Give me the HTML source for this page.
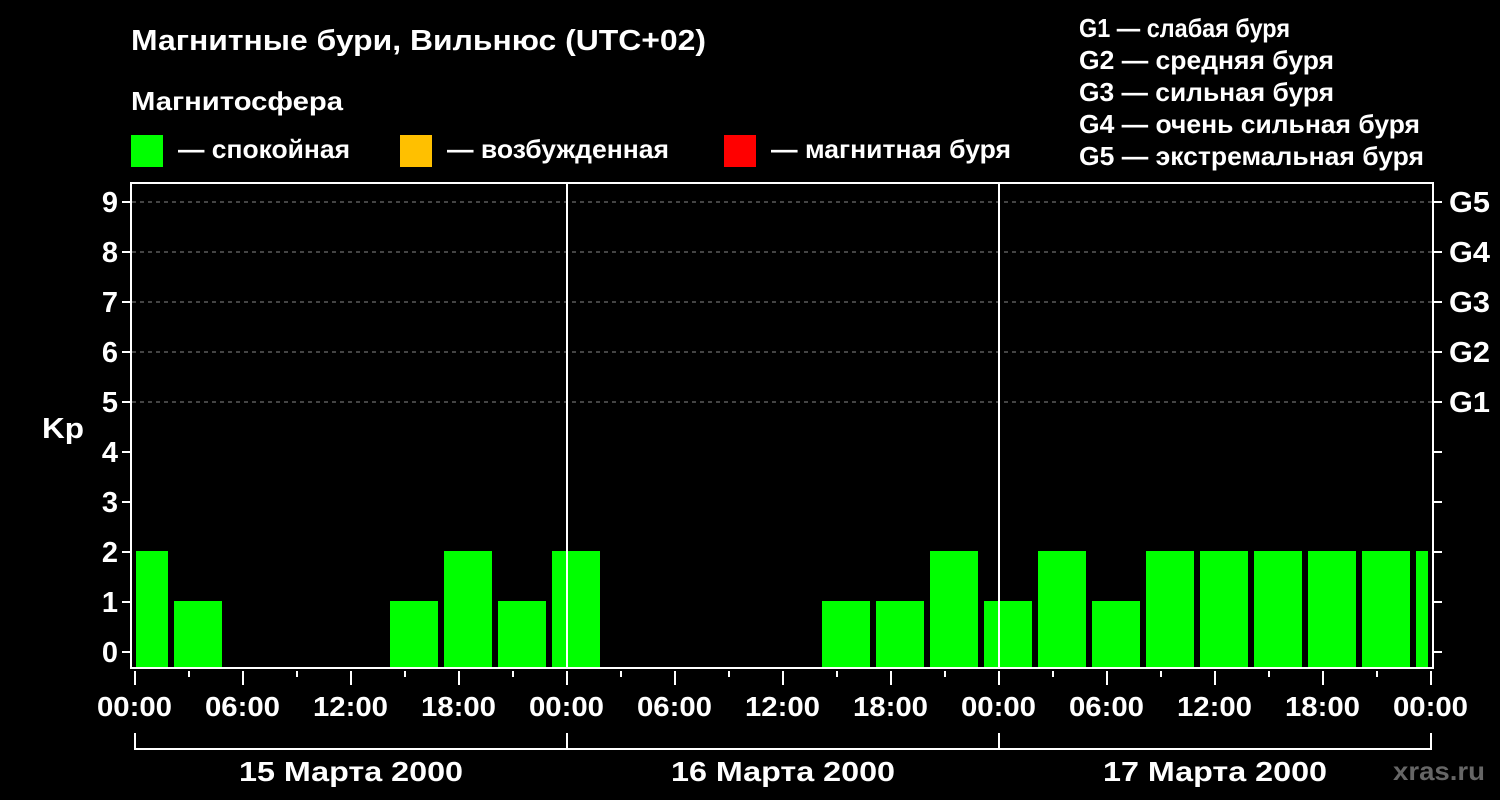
<!DOCTYPE html>
<html><head><meta charset="utf-8"><style>
html,body{margin:0;padding:0;background:#000;}
svg{display:block;font-family:"Liberation Sans",sans-serif;font-weight:bold;}
</style></head><body>
<svg width="1500" height="800" viewBox="0 0 1500 800" xmlns="http://www.w3.org/2000/svg">
<rect width="1500" height="800" fill="#000"/>
<g fill="#fff">
<text x="131" y="50" font-size="29" textLength="575" lengthAdjust="spacingAndGlyphs">Магнитные бури, Вильнюс (UTC+02)</text>
<text x="131" y="110" font-size="26" textLength="212" lengthAdjust="spacingAndGlyphs">Магнитосфера</text>
<text x="178" y="158" font-size="26" textLength="172" lengthAdjust="spacingAndGlyphs">— спокойная</text>
<text x="447" y="158" font-size="26" textLength="222" lengthAdjust="spacingAndGlyphs">— возбужденная</text>
<text x="771" y="158" font-size="26" textLength="240" lengthAdjust="spacingAndGlyphs">— магнитная буря</text>
<g font-size="26">
<text x="1079" y="37" textLength="211" lengthAdjust="spacingAndGlyphs">G1 — слабая буря</text>
<text x="1079" y="69" textLength="255" lengthAdjust="spacingAndGlyphs">G2 — средняя буря</text>
<text x="1079" y="101" textLength="255" lengthAdjust="spacingAndGlyphs">G3 — сильная буря</text>
<text x="1079" y="133" textLength="341" lengthAdjust="spacingAndGlyphs">G4 — очень сильная буря</text>
<text x="1079" y="165" textLength="345" lengthAdjust="spacingAndGlyphs">G5 — экстремальная буря</text>
</g>
</g>
<rect x="131" y="135" width="32" height="32" fill="#00ff00"/>
<rect x="400" y="135" width="32" height="32" fill="#ffc000"/>
<rect x="724" y="135" width="32" height="32" fill="#ff0000"/>

<g stroke="#888" stroke-dasharray="4,4" stroke-width="1">
<line x1="132" y1="202" x2="1432" y2="202"/>
<line x1="132" y1="252" x2="1432" y2="252"/>
<line x1="132" y1="302" x2="1432" y2="302"/>
<line x1="132" y1="352" x2="1432" y2="352"/>
<line x1="132" y1="402" x2="1432" y2="402"/>
</g>
<g fill="#00ff00">
<rect x="136" y="551" width="32" height="117"/>
<rect x="174" y="601" width="48" height="67"/>
<rect x="390" y="601" width="48" height="67"/>
<rect x="444" y="551" width="48" height="117"/>
<rect x="498" y="601" width="48" height="67"/>
<rect x="552" y="551" width="48" height="117"/>
<rect x="822" y="601" width="48" height="67"/>
<rect x="876" y="601" width="48" height="67"/>
<rect x="930" y="551" width="48" height="117"/>
<rect x="984" y="601" width="48" height="67"/>
<rect x="1038" y="551" width="48" height="117"/>
<rect x="1092" y="601" width="48" height="67"/>
<rect x="1146" y="551" width="48" height="117"/>
<rect x="1200" y="551" width="48" height="117"/>
<rect x="1254" y="551" width="48" height="117"/>
<rect x="1308" y="551" width="48" height="117"/>
<rect x="1362" y="551" width="48" height="117"/>
<rect x="1416" y="551" width="12" height="117"/>
</g>
<g stroke="#fff" stroke-width="2" fill="none">
<rect x="131" y="183" width="1302" height="485"/>
<line x1="567" y1="183" x2="567" y2="668"/>
<line x1="999" y1="183" x2="999" y2="668"/>
<path d="M122 202H131M122 252H131M122 302H131M122 352H131M122 402H131M122 452H131M122 502H131M122 552H131M122 602H131M122 652H131"/>
<path d="M1433 202H1442M1433 252H1442M1433 302H1442M1433 352H1442M1433 402H1442M1433 452H1442M1433 502H1442M1433 552H1442M1433 602H1442M1433 652H1442"/>
<path d="M135 671V685M243 671V685M351 671V685M459 671V685M567 671V685M675 671V685M783 671V685M891 671V685M999 671V685M1107 671V685M1215 671V685M1323 671V685M1431 671V685"/>
<path d="M189 671V677M297 671V677M405 671V677M513 671V677M621 671V677M729 671V677M837 671V677M945 671V677M1053 671V677M1161 671V677M1269 671V677M1377 671V677"/>
<path d="M135 733V749H1431V733M567 733V749M999 733V749"/>
</g>
<g fill="#fff" font-size="29">
<g text-anchor="end">
<text x="118" y="212">9</text><text x="118" y="262">8</text><text x="118" y="312">7</text><text x="118" y="362">6</text><text x="118" y="412">5</text><text x="118" y="462">4</text><text x="118" y="512">3</text><text x="118" y="562">2</text><text x="118" y="612">1</text><text x="118" y="662">0</text>
</g>
<text x="42" y="438" textLength="42" lengthAdjust="spacingAndGlyphs">Kp</text>
<g>
<text x="1449" y="212" textLength="41" lengthAdjust="spacingAndGlyphs">G5</text><text x="1449" y="262" textLength="41" lengthAdjust="spacingAndGlyphs">G4</text><text x="1449" y="312" textLength="41" lengthAdjust="spacingAndGlyphs">G3</text><text x="1449" y="362" textLength="41" lengthAdjust="spacingAndGlyphs">G2</text><text x="1449" y="412" textLength="41" lengthAdjust="spacingAndGlyphs">G1</text>
</g>
<g font-size="28">
<text x="97" y="716" textLength="75" lengthAdjust="spacingAndGlyphs">00:00</text>
<text x="205" y="716" textLength="75" lengthAdjust="spacingAndGlyphs">06:00</text>
<text x="313" y="716" textLength="75" lengthAdjust="spacingAndGlyphs">12:00</text>
<text x="421" y="716" textLength="75" lengthAdjust="spacingAndGlyphs">18:00</text>
<text x="529" y="716" textLength="75" lengthAdjust="spacingAndGlyphs">00:00</text>
<text x="637" y="716" textLength="75" lengthAdjust="spacingAndGlyphs">06:00</text>
<text x="745" y="716" textLength="75" lengthAdjust="spacingAndGlyphs">12:00</text>
<text x="853" y="716" textLength="75" lengthAdjust="spacingAndGlyphs">18:00</text>
<text x="961" y="716" textLength="75" lengthAdjust="spacingAndGlyphs">00:00</text>
<text x="1069" y="716" textLength="75" lengthAdjust="spacingAndGlyphs">06:00</text>
<text x="1177" y="716" textLength="75" lengthAdjust="spacingAndGlyphs">12:00</text>
<text x="1285" y="716" textLength="75" lengthAdjust="spacingAndGlyphs">18:00</text>
<text x="1393" y="716" textLength="75" lengthAdjust="spacingAndGlyphs">00:00</text>
<text x="239" y="781" textLength="224" lengthAdjust="spacingAndGlyphs">15 Марта 2000</text>
<text x="671" y="781" textLength="224" lengthAdjust="spacingAndGlyphs">16 Марта 2000</text>
<text x="1103" y="781" textLength="224" lengthAdjust="spacingAndGlyphs">17 Марта 2000</text>
</g>
<text x="1393" y="780" font-size="26" fill="#666" textLength="92" lengthAdjust="spacingAndGlyphs">xras.ru</text>
</g>
</svg>
</body></html>
